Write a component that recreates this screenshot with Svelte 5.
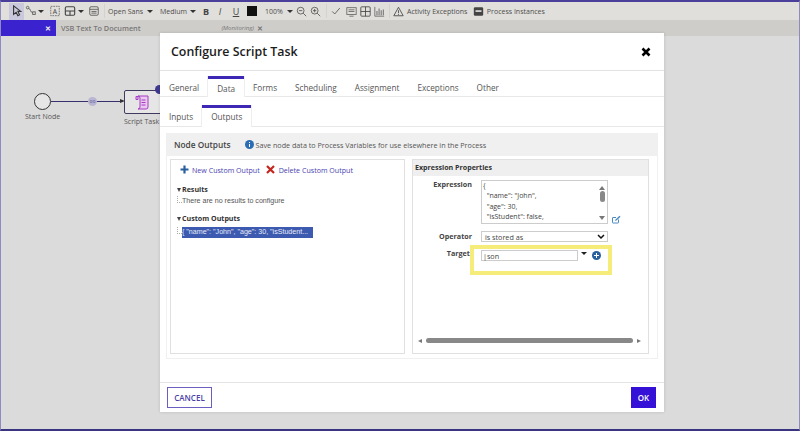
<script>
  const tabs = ['General', 'Data', 'Forms', 'Scheduling', 'Assignment', 'Exceptions', 'Other'];
  const subTabs = ['Inputs', 'Outputs'];
  let activeTab = 'Data';
  let activeSub = 'Outputs';
</script>

<div class="app">
  <div class="toolbar">
    <span class="tool selected">
      <svg width="12" height="14" viewBox="0 0 12 14"><path d="M2 1v10l3-2.500 2 4 2-1-2-4h3.500z" fill="none" stroke="#333" stroke-width="1.300"/></svg>
    </span>
    <span class="tool">
      <svg width="14" height="14" viewBox="0 0 14 14"><circle cx="3" cy="3" r="1.500" fill="none" stroke="#555"/><path d="M4 4c3 0 2 5 5 5" fill="none" stroke="#555"/><rect x="9" y="8" width="3" height="3" fill="none" stroke="#555"/></svg>
    </span>
    <span class="caret flush"></span>
    <span class="tool m4">
      <svg width="14" height="14" viewBox="0 0 14 14"><rect x="2" y="1.500" width="10" height="11" fill="none" stroke="#666" stroke-dasharray="2 1"/><text x="7" y="10" font-size="8" font-family="Open Sans" text-anchor="middle" fill="#444">A</text></svg>
    </span>
    <span class="tool m1">
      <svg width="14" height="14" viewBox="0 0 14 14"><rect x="1.500" y="2" width="11" height="10" rx="1.500" fill="none" stroke="#444" stroke-width="1.300"/><path d="M1.500 7h11M7 7v5" stroke="#444" stroke-width="1.300"/></svg>
    </span>
    <span class="caret tight"></span>
    <span class="tool m3">
      <svg width="14" height="14" viewBox="0 0 14 14"><rect x="2" y="2" width="10" height="10" rx="1.500" fill="none" stroke="#555"/><path d="M2 5h10M4 7.500h6M4 9.500h6" stroke="#555"/></svg>
    </span>
    <span class="sep"></span>
    <span class="label fixed-font">Open Sans</span><span class="caret"></span>
    <span class="label fixed-weight">Medium</span><span class="caret"></span>
    <b class="fmt first">B</b>
    <i class="fmt">I</i>
    <u class="fmt under">U</u>
    <span class="swatch"></span>
    <span class="label pct">100%</span><span class="caret wide"></span>
    <span class="tool zoom">
      <svg width="13" height="13" viewBox="0 0 13 13"><circle cx="5.500" cy="5.500" r="4" fill="none" stroke="#555"/><path d="M8.500 8.500l3.500 3.500M3.500 5.500h4" stroke="#555"/></svg>
    </span>
    <span class="tool zoom">
      <svg width="13" height="13" viewBox="0 0 13 13"><circle cx="5.500" cy="5.500" r="4" fill="none" stroke="#555"/><path d="M8.500 8.500l3.500 3.500M3.500 5.500h4M5.500 3.500v4" stroke="#555"/></svg>
    </span>
    <span class="sep mid"></span>
    <span class="tool">
      <svg width="12" height="12" viewBox="0 0 12 12"><path d="M1.500 6.500l3 3 6-7" fill="none" stroke="#555"/></svg>
    </span>
    <span class="tool m3">
      <svg width="13" height="13" viewBox="0 0 13 13"><rect x="1" y="2" width="11" height="8" fill="none" stroke="#666"/><path d="M3 4.500h7M3 6.500h7M4 12h5" stroke="#666"/></svg>
    </span>
    <span class="tool m1">
      <svg width="13" height="13" viewBox="0 0 13 13"><rect x="1" y="1" width="11" height="11" rx="1" fill="none" stroke="#444"/><path d="M6.500 1v11M1 6.500h11" stroke="#444"/></svg>
    </span>
    <span class="tool m1">
      <svg width="13" height="13" viewBox="0 0 13 13"><path d="M1 1v11h11" fill="none" stroke="#666"/><path d="M3.500 11V6M6 11V3M8.500 11V5M11 11V4" stroke="#777" stroke-width="1.300"/></svg>
    </span>
    <span class="sep end"></span>
    <span class="tool action">
      <svg width="13" height="13" viewBox="0 0 13 13"><path d="M6.500 1.500L12 11.500H1z" fill="none" stroke="#444"/><path d="M6.500 5v3.500M6.500 9.500v1" stroke="#444"/></svg>
      Activity Exceptions
    </span>
    <span class="tool action second">
      <svg width="13" height="13" viewBox="0 0 13 13"><rect x="1" y="1.500" width="11" height="10" rx="1.500" fill="#444"/><path d="M3 5h7v2H3z" fill="#ddd"/></svg>
      Process Instances
    </span>
  </div>

  <div class="doctabs">
    <div class="doctab active"><span class="close">✕</span></div>
    <div class="doctab name">
      <span>VSB Text To Document</span>
      <em>(Monitoring)</em>
      <span class="close grey">✕</span>
    </div>
  </div>

  <div class="canvas">
    <div class="node start"></div>
    <span class="node-label start-label">Start Node</span>
    <div class="flow"></div>
    <div class="flow-head"></div>
    <div class="flow-dot">oo</div>
    <div class="node task">
      <svg width="17" height="17" viewBox="0 0 17 17"><path d="M4 2h10v11a2 2 0 0 1-2 2H4a2 2 0 0 0 2-2V4a2 2 0 0 0-2-2zM2 2.500h2v3H2zM7.500 6h4M7.500 8.500h4M7.500 11h4" fill="#e9c9ef" stroke="#a63bc4" stroke-width="1"/></svg>
    </div>
    <div class="node-gear"></div>
    <span class="node-label task-label">Script Task</span>
  </div>

  <div class="modal">
    <header>
      <h1>Configure Script Task</h1>
      <svg width="10" height="10" viewBox="0 0 10 10"><path d="M1.500 1.500l7 7M8.500 1.500l-7 7" stroke="#000" stroke-width="2.600"/></svg>
    </header>

    <nav class="tabs">
      {#each tabs as tab}
        <span class="tab" class:active={tab === activeTab}>{tab}</span>
      {/each}
    </nav>

    <nav class="tabs sub">
      {#each subTabs as tab}
        <span class="tab" class:active={tab === activeSub}>{tab}</span>
      {/each}
    </nav>

    <section class="body">
      <div class="section-head">
        <strong>Node Outputs</strong>
        <svg width="9" height="9" viewBox="0 0 9 9"><circle cx="4.500" cy="4.500" r="4.500" fill="#2a6db5"/><path d="M4.500 2v1M4.500 4v3" stroke="#fff"/></svg>
        <span>Save node data to Process Variables for use elsewhere in the Process</span>
      </div>

      <div class="panels">
        <div class="panel left">
          <div class="actions">
            <svg width="9" height="9" viewBox="0 0 9 9"><path d="M4.500 .5v8M.5 4.500h8" stroke="#2a5f9e" stroke-width="2.200"/></svg>
            <span class="link">New Custom Output</span>
            <svg class="del" width="9" height="9" viewBox="0 0 9 9"><path d="M1 1l7 7M8 1l-7 7" stroke="#c4271f" stroke-width="2.200"/></svg>
            <span class="link">Delete Custom Output</span>
          </div>

          <div class="tree-title"><i></i>Results</div>
          <div class="tree-row"><b></b>There are no results to configure</div>
          <div class="tree-title custom"><i></i>Custom Outputs</div>
          <div class="tree-row sel"><b></b><span class="selected-row">{'{'} "name": "John", "age": 30, "isStudent...</span></div>
        </div>

        <div class="panel right">
          <div class="panel-head">Expression Properties</div>
          <div class="form">
            <label class="expr-label" for="expr">Expression</label>
            <div class="expr-wrap">
              <div class="expr" id="expr">
                <pre>{'{'}
  "name": "John",
  "age": 30,
  "isStudent": false,</pre>
                <div class="vbar"><i class="up"></i><b></b><i class="down"></i></div>
              </div>
              <svg class="edit" width="9" height="9" viewBox="0 0 9 9"><path d="M6.500 4.500v3a.5.5 0 0 1-.5.5H1a.5.5 0 0 1-.5-.5V3a.5.5 0 0 1 .5-.5h3" fill="none" stroke="#4a8ac4"/><path d="M3 6l.5-1.500L7.500 .8l1 1-4 3.800z" fill="#4a8ac4"/></svg>
            </div>

            <label class="op-label" for="op">Operator</label>
            <div class="select" id="op">
              <span>is stored as</span>
              <svg width="8" height="6" viewBox="0 0 8 6"><path d="M1 1l3 3 3-3" fill="none" stroke="#111" stroke-width="1.500"/></svg>
            </div>

            <label class="target-label" for="target">Target</label>
            <div class="target" id="target">
              <span class="input">|son</span>
              <span class="caret dark"></span>
              <svg width="9" height="9" viewBox="0 0 9 9"><circle cx="4.500" cy="4.500" r="4.500" fill="#2a5f9e"/><path d="M4.500 2v5M2 4.500h5" stroke="#fff"/></svg>
            </div>
          </div>

          <div class="hbar"><i class="lt"></i><b></b><i class="rt"></i></div>
        </div>
      </div>
    </section>

    <footer>
      <button class="cancel">CANCEL</button>
      <button class="ok">OK</button>
    </footer>
  </div>
</div>

<style>
  :global(body) {
    margin: 0;
    background: #dcdbdb;
  }

  .app {
    position: relative;
    width: 800px;
    height: 431px;
    box-sizing: border-box;
    border: 1px solid #8f8ac0;
    border-top: 2px solid #4a3f9a;
    border-bottom: 2px solid #3b3480;
    overflow: hidden;
    font-family: "Open Sans", sans-serif;
    color: #555;
    display: flex;
    flex-direction: column;
  }

  .toolbar {
    height: 18px;
    flex: none;
    background: #e0dfdb;
    display: flex;
    align-items: center;
    padding-left: 8px;
    font-size: 7px;
    color: #4d4d4d;
    white-space: nowrap;
  }

  .tool {
    display: inline-flex;
    align-items: center;
    gap: 2px;
    flex: none;
  }

  .tool svg {
    transform: scale(0.85);
  }

  .m1 {
    margin-left: 1px;
  }

  .m3 {
    margin-left: 3px;
  }

  .m4 {
    margin-left: 4px;
  }

  .tool.selected {
    background: #c9c8dd;
    width: 15px;
    height: 17px;
    justify-content: center;
  }

  .caret {
    width: 0;
    height: 0;
    flex: none;
    border-left: 3px solid transparent;
    border-right: 3px solid transparent;
    border-top: 3px solid #333;
    margin-left: 3px;
  }

  .caret.flush {
    margin-left: 0;
  }

  .caret.tight {
    margin-left: 1px;
  }

  .caret.wide {
    margin-left: 4px;
  }

  .caret.dark {
    border-top-color: #222;
    margin: 2px 5px 0 3px;
  }

  .sep {
    width: 1px;
    height: 14px;
    flex: none;
    background: #d3d2ce;
    margin: 0 3px;
  }

  .sep.mid {
    margin: 0 3px 0 4px;
  }

  .sep.end {
    margin: 0 2.500px;
  }

  .fixed-font {
    width: 36px;
  }

  .fixed-weight {
    width: 27px;
    margin-left: 7px;
  }

  .fmt {
    width: 8px;
    text-align: center;
    font-size: 9px;
    color: #444;
    margin-left: 6px;
  }

  .fmt.under {
    margin-left: 8px;
  }

  .swatch {
    width: 10px;
    height: 10px;
    flex: none;
    background: #111;
    margin-left: 7px;
  }

  .pct {
    width: 18px;
    margin-left: 8px;
  }

  .zoom {
    margin-left: 1.500px;
  }

  .action.second {
    margin-left: 4.500px;
  }

  .doctabs {
    height: 16px;
    flex: none;
    background: #cfcdca;
    display: flex;
    align-items: center;
    font-size: 7.300px;
    font-weight: 600;
    color: #777;
  }

  .doctab.active {
    width: 55px;
    height: 16px;
    background: #3a22cf;
    color: #eee;
    display: flex;
    align-items: center;
    justify-content: flex-end;
    padding-right: 5px;
    box-sizing: border-box;
  }

  .doctab.name {
    display: flex;
    align-items: center;
    width: 207px;
    padding-left: 5px;
    box-sizing: border-box;
  }

  .doctab em {
    margin-left: auto;
    font-weight: 400;
    font-size: 6px;
    margin-right: 3px;
  }

  .close {
    font-size: 7px;
    font-weight: 700;
  }

  .close.grey {
    color: #777;
  }

  .canvas {
    position: relative;
    flex: 1;
    background: #dcdbdb;
  }

  .node {
    position: absolute;
    box-sizing: border-box;
    border: 1.500px solid #333;
  }

  .start {
    left: 33px;
    top: 57px;
    width: 17px;
    height: 17px;
    border-radius: 50%;
    background: #e6e6e6;
  }

  .node-label {
    position: absolute;
    font-size: 7px;
    color: #555;
    white-space: nowrap;
  }

  .start-label {
    left: 24px;
    top: 76px;
  }

  .flow {
    position: absolute;
    left: 50px;
    top: 65px;
    width: 72px;
    height: 1px;
    background: #37306f;
  }

  .flow-head {
    position: absolute;
    left: 119px;
    top: 63px;
    border-left: 5px solid #333;
    border-top: 2.500px solid transparent;
    border-bottom: 2.500px solid transparent;
  }

  .flow-dot {
    position: absolute;
    left: 87px;
    top: 61px;
    width: 9px;
    height: 9px;
    border-radius: 50%;
    background: #b9b6d3;
    color: #5c5796;
    font-size: 5px;
    line-height: 8px;
    text-align: center;
  }

  .task {
    left: 123px;
    top: 54px;
    width: 38px;
    height: 24px;
    border-radius: 2px;
    background: #e6e6e6;
    border-color: #3f3a5e;
    display: flex;
    align-items: center;
    justify-content: center;
    padding-right: 2px;
  }

  .node-gear {
    position: absolute;
    left: 154px;
    top: 49px;
    width: 9px;
    height: 9px;
    border-radius: 50%;
    background: #3f3a8f;
  }

  .task-label {
    left: 123px;
    top: 81px;
  }

  .modal {
    position: absolute;
    left: 159px;
    top: 31px;
    width: 504px;
    height: 379px;
    background: #fff;
    box-shadow: 0 0 3px rgba(0, 0, 0, 0.15);
    display: flex;
    flex-direction: column;
  }

  header {
    height: 38px;
    flex: none;
    box-sizing: border-box;
    border-bottom: 1px solid #e2e2e2;
    display: flex;
    align-items: center;
    justify-content: space-between;
    padding: 0 13px 0 11px;
  }

  h1 {
    margin: 0;
    font-size: 12.400px;
    font-weight: 600;
    color: #1c1c1c;
  }

  .tabs {
    height: 26px;
    flex: none;
    box-sizing: border-box;
    border-bottom: 1px solid #e8e8e8;
    display: flex;
    align-items: stretch;
    font-size: 8.200px;
    color: #555;
  }

  .tab {
    padding: 0 9px;
    display: flex;
    align-items: center;
    border-top: 3px solid transparent;
    margin-top: 5px;
  }

  .tab.active {
    border-top-color: #3d27b5;
    background: #fff;
    box-shadow: 1px 0 0 #eee, -1px 0 0 #eee;
    margin-bottom: -1px;
  }

  .sub {
    height: 30px;
  }

  .sub .tab {
    margin-top: 8px;
    padding-bottom: 2px;
  }

  .body {
    flex: 1;
    margin: 6px 6px 23px;
    box-sizing: border-box;
    border: 1px solid #f0f0f0;
    display: flex;
    flex-direction: column;
    min-height: 0;
  }

  .section-head {
    height: 22px;
    flex: none;
    background: #f0f0f0;
    display: flex;
    align-items: center;
    padding: 0 0 1px 7px;
    box-sizing: border-box;
    font-size: 7.200px;
    color: #555;
    gap: 2px;
  }

  .section-head strong {
    font-size: 8.300px;
    font-weight: 600;
    color: #444;
    margin-right: 12px;
  }

  .panels {
    flex: 1;
    display: flex;
    gap: 7px;
    padding: 3px 8px 4px 3px;
    min-height: 0;
  }

  .panel {
    box-sizing: border-box;
    border: 1px solid #e0e0e0;
    background: #fff;
    display: flex;
    flex-direction: column;
  }

  .panel.left {
    width: 235px;
    padding: 4px 6px;
  }

  .panel.right {
    flex: 1;
    position: relative;
  }

  .actions {
    display: flex;
    align-items: center;
    font-size: 7.100px;
    margin-left: 3px;
    height: 11px;
  }

  .actions svg {
    margin-right: 3px;
  }

  .actions .del {
    margin-left: 6px;
    margin-right: 4px;
  }

  .link {
    color: #4a42b0;
  }

  .tree-title {
    font-size: 7.100px;
    font-weight: 700;
    color: #333;
    margin-top: 9px;
    height: 11px;
    line-height: 11px;
    display: flex;
    align-items: center;
  }

  .tree-title.custom {
    margin-top: 6px;
  }

  .tree-title i {
    width: 0;
    height: 0;
    border-left: 2px solid transparent;
    border-right: 2px solid transparent;
    border-top: 4px solid #444;
    margin-right: 1px;
  }

  .tree-row {
    font-family: "Liberation Sans", sans-serif;
    font-size: 7.100px;
    color: #555;
    display: flex;
    align-items: center;
    height: 12px;
  }

  .tree-row.sel {
    margin-top: 2px;
  }

  .tree-row b {
    width: 4px;
    height: 6px;
    border-left: 1px dotted #aaa;
    border-bottom: 1px dotted #aaa;
    margin-top: -4px;
  }

  .selected-row {
    background: #3c5ab0;
    color: #e8ecf8;
    height: 11px;
    line-height: 11px;
    width: 131px;
    white-space: nowrap;
  }

  .panel-head {
    height: 16px;
    background: #efefef;
    font-size: 7.100px;
    font-weight: 700;
    line-height: 15px;
    padding-left: 2px;
    color: #333;
  }

  .form {
    display: grid;
    grid-template-columns: 59px 1fr;
    column-gap: 9px;
    font-size: 7.200px;
    color: #444;
  }

  label {
    text-align: right;
    font-weight: 700;
    color: #444;
    margin-top: 3px;
  }

  .expr-wrap {
    display: flex;
    align-items: flex-end;
    gap: 4px;
    margin-top: 4px;
  }

  .expr {
    width: 127px;
    height: 44px;
    box-sizing: border-box;
    border: 1px solid #ccc;
    position: relative;
    overflow: hidden;
  }

  .expr pre {
    margin: 0;
    padding: 0 0 0 1px;
    font-family: "Open Sans", sans-serif;
    font-size: 7px;
    line-height: 10.300px;
    color: #444;
  }

  .vbar {
    position: absolute;
    right: 0;
    top: 0;
    bottom: 0;
    width: 10px;
    display: flex;
    flex-direction: column;
    align-items: center;
    justify-content: space-between;
    padding: 5px 0 3px;
    box-sizing: border-box;
  }

  .vbar b {
    width: 5px;
    height: 11px;
    background: #888;
    border-radius: 3px;
    margin-top: -7px;
    margin-bottom: 7px;
  }

  .up {
    border-left: 3px solid transparent;
    border-right: 3px solid transparent;
    border-bottom: 4px solid #777;
  }

  .down {
    border-left: 3px solid transparent;
    border-right: 3px solid transparent;
    border-top: 4px solid #777;
  }

  .op-label {
    margin-top: 7px;
  }

  .select {
    width: 127px;
    height: 11px;
    box-sizing: border-box;
    border: 1px solid #ccc;
    margin-top: 7px;
    display: flex;
    align-items: center;
    justify-content: space-between;
    padding: 0 2px 0 3px;
  }

  .target-label {
    margin-top: 6px;
    margin-right: 2px;
  }

  .target {
    margin: 3px 0 0 -11px;
    width: 142px;
    height: 30px;
    box-sizing: border-box;
    border: 4px solid #f6ec7a;
    display: flex;
    align-items: flex-start;
    padding: 1px 0 0 7px;
  }

  .input {
    width: 97px;
    height: 11px;
    box-sizing: border-box;
    border: 1px solid #ccc;
    line-height: 10px;
    padding-left: 1px;
    flex: none;
  }

  .target svg {
    margin-top: 1px;
  }

  .hbar {
    position: absolute;
    left: 5px;
    right: 7px;
    bottom: 10px;
    height: 5px;
    display: flex;
    align-items: center;
    gap: 4px;
  }

  .hbar b {
    flex: 1;
    height: 5px;
    border-radius: 3px;
    background: #888;
  }

  .lt {
    border-top: 2.500px solid transparent;
    border-bottom: 2.500px solid transparent;
    border-right: 4px solid #777;
  }

  .rt {
    border-top: 2.500px solid transparent;
    border-bottom: 2.500px solid transparent;
    border-left: 4px solid #777;
  }

  footer {
    height: 30px;
    flex: none;
    box-sizing: border-box;
    border-top: 1px solid #e4e4e4;
    display: flex;
    justify-content: space-between;
    align-items: center;
    padding: 0 8px 0 7px;
  }

  button {
    font-family: "Open Sans", sans-serif;
    font-size: 8px;
    font-weight: 600;
    height: 21px;
    border-radius: 0;
    padding: 0;
  }

  .cancel {
    width: 45px;
    background: #fff;
    border: 1px solid #6a5fc0;
    color: #4a3fa8;
  }

  .ok {
    width: 25px;
    background: #3511d8;
    border: none;
    color: #fff;
  }
</style>
